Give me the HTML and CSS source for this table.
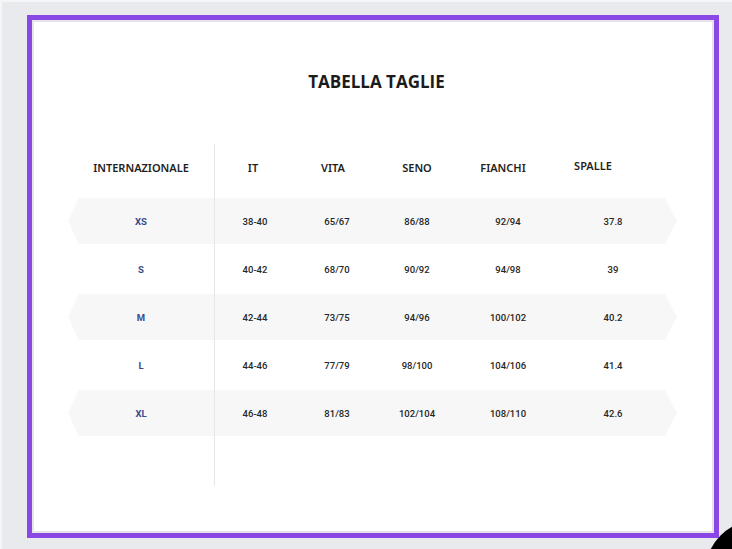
FILE: index.html
```html
<!DOCTYPE html>
<html lang="it">
<head>
<meta charset="utf-8">
<title>Tabella taglie</title>
<link rel="stylesheet" href="styles.css">
</head>
<body>
<div class="page">
  <div class="frame">
    <div class="sheet">
      <h1 class="title">TABELLA TAGLIE</h1>
      <div class="table">
        <div class="row head">
          <div class="cell">INTERNAZIONALE</div>
          <div class="cell h-it">IT</div>
          <div class="cell h-vita">VITA</div>
          <div class="cell">SENO</div>
          <div class="cell h-fianchi">FIANCHI</div>
          <div class="cell h-spalle">SPALLE</div>
        </div>
        <div class="row band">
          <div class="cell size">XS</div>
          <div class="cell">38-40</div>
          <div class="cell">65/67</div>
          <div class="cell">86/88</div>
          <div class="cell">92/94</div>
          <div class="cell">37.8</div>
        </div>
        <div class="row">
          <div class="cell size">S</div>
          <div class="cell">40-42</div>
          <div class="cell">68/70</div>
          <div class="cell">90/92</div>
          <div class="cell">94/98</div>
          <div class="cell">39</div>
        </div>
        <div class="row band">
          <div class="cell size">M</div>
          <div class="cell">42-44</div>
          <div class="cell">73/75</div>
          <div class="cell">94/96</div>
          <div class="cell">100/102</div>
          <div class="cell">40.2</div>
        </div>
        <div class="row">
          <div class="cell size">L</div>
          <div class="cell">44-46</div>
          <div class="cell">77/79</div>
          <div class="cell">98/100</div>
          <div class="cell">104/106</div>
          <div class="cell">41.4</div>
        </div>
        <div class="row band">
          <div class="cell size">XL</div>
          <div class="cell">46-48</div>
          <div class="cell">81/83</div>
          <div class="cell">102/104</div>
          <div class="cell">108/110</div>
          <div class="cell">42.6</div>
        </div>
      </div>
    </div>
  </div>
  <div class="corner"></div>
</div>
</body>
</html>
```

FILE: styles.css
```css
html, body {
  margin: 0;
  padding: 0;
}
body {
  background: #e9eaee;
  width: 732px;
  height: 549px;
  overflow: hidden;
}
.page {
  position: relative;
  width: 732px;
  height: 549px;
  overflow: hidden;
  box-sizing: border-box;
  border-top: 2px solid #f6f6f8;
  border-left: 2px solid #f6f6f8;
  padding: 13px 0 0 25px;
}
.frame {
  width: 692px;
  height: 523px;
  box-sizing: border-box;
  border: 5px solid #8b47e6;
}
.sheet {
  height: 100%;
  box-sizing: border-box;
  border: 2px solid #e4e4e9;
  background: #ffffff;
  padding-top: 48px;
}
.title {
  margin: 0 0 50px 0;
  text-align: center;
  padding-left: 7px;
  font-family: "Open Sans", "Noto Sans", sans-serif;
  font-weight: 700;
  font-size: 17px;
  line-height: 24px;
  color: #1b1b1b;
}
.table {
  position: relative;
  margin-left: 34px;
  width: 609px;
  height: 342px;
}
.table::before {
  content: "";
  position: absolute;
  left: 146px;
  top: 0;
  width: 1px;
  height: 342px;
  background: #e6e6e6;
  z-index: 1;
}
.row {
  display: grid;
  grid-template-columns: 146px 82px 82px 78px 104px 106px;
  align-items: center;
  height: 46px;
  margin: 0 0 2px 0;
  font-family: "Roboto", "Noto Sans", sans-serif;
  font-weight: 500;
  font-size: 9.5px;
  color: #262626;
}
.row.head {
  height: 54px;
  margin: 0;
  align-items: start;
  padding-top: 16px;
  box-sizing: border-box;
  font-family: "Noto Sans", "Open Sans", sans-serif;
  font-weight: 600;
  font-size: 11px;
  color: #1f1f1f;
}
.band {
  background: #f7f7f7;
  clip-path: polygon(11px 0, calc(100% - 12px) 0, 100% 50%, calc(100% - 12px) 100%, 11px 100%, 0 50%);
}
.cell {
  text-align: center;
  white-space: nowrap;
}
.size {
  color: #3a4b8c;
  font-weight: 700;
}
.h-it { padding-right: 4px; }
.h-vita { padding-right: 8px; }
.h-fianchi { padding-right: 10px; }
.h-spalle { padding-right: 40px; margin-top: -2px; }
.corner {
  position: absolute;
  left: 703px;
  top: 518px;
  width: 106px;
  height: 106px;
  border-radius: 50%;
  background: #000000;
}
```
